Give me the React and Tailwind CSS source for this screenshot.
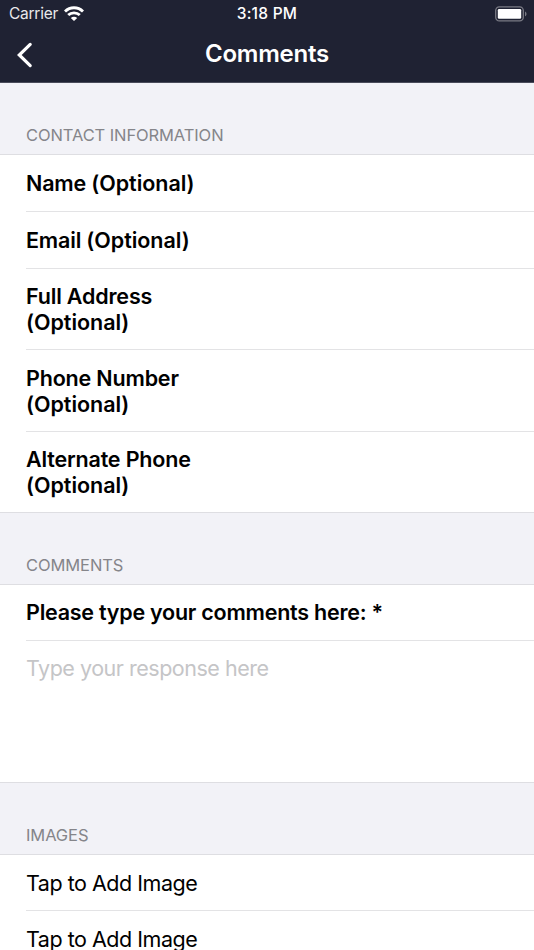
import React from 'react';

const contactFields = [
  { label: 'Name', height: 'h-[57px]' },
  { label: 'Email', height: 'h-[57px]' },
  { label: 'Full Address', height: 'h-[81px]', wrap: true },
  { label: 'Phone Number', height: 'h-[82px]', wrap: true },
  { label: 'Alternate Phone', height: 'h-[80px]', wrap: true },
];

const images = ['Tap to Add Image', 'Tap to Add Image'];

const WifiIcon = () => (
  <svg className="mb-px" width="20" height="15" viewBox="0 0 20 15" fill="none" stroke="currentColor" strokeWidth="2.8">
    <path d="M1 5.5C6 .5 14 .5 19 5.5" />
    <path d="M4.2 9.1c3.2-3.1 8.4-3.1 11.6 0" />
    <path d="M10 15l-3.2-3.1c1.8-1.6 4.6-1.6 6.4 0z" fill="currentColor" stroke="none" />
  </svg>
);

const BatteryIcon = () => (
  <svg className="mb-px" width="32" height="16" viewBox="0 0 32 16" fill="none">
    <rect x="0.7" y="0.9" width="27.6" height="14" rx="3.6" stroke="#797a84" strokeWidth="1.3" />
    <rect x="2.8" y="3" width="23.4" height="9.8" rx="1.3" fill="white" />
    <path d="M30 5.5c2 .8 2 4 0 4.8z" fill="#797a84" />
  </svg>
);

const BackIcon = () => (
  <svg className="ml-4 mt-px" width="17" height="26" viewBox="0 0 17 26" fill="none" stroke="currentColor" strokeWidth="3.2" strokeLinecap="round" strokeLinejoin="miter">
    <path d="M14.2 2.4L3.3 13l10.9 10.6" />
  </svg>
);

const SectionHeader = ({ children }) => (
  <div className="h-[71px] shrink-0 flex items-end pl-[26px] pb-[7px] text-[16.5px] leading-6 tracking-[-0.1px] text-[#85858a]">
    {children}
  </div>
);

const App = () => {
  return (
    <div className="h-[950px] w-[534px] overflow-hidden bg-[#f2f2f7] font-['Inter',sans-serif] text-black flex flex-col">
      {/* Header */}
      <header className="h-[83px] shrink-0 bg-[#1f2233] border-b border-[#4a4c5b] text-white">
        <div className="h-[28px] grid grid-cols-3 items-center px-[7px] text-[15.5px]">
          <div className="flex items-center gap-[6px] pl-[2px]">
            <span className="tracking-[-0.25px] text-[#e9e9eb]">Carrier</span>
            <WifiIcon />
          </div>
          <div className="text-center font-medium tracking-[0.25px]">3:18 PM</div>
          <div className="flex justify-end">
            <BatteryIcon />
          </div>
        </div>
        <div className="h-[52px] grid grid-cols-3 items-center">
          <BackIcon />
          <h1 className="text-center text-[24px] font-semibold tracking-[-0.25px]">Comments</h1>
        </div>
      </header>

      {/* Contact Information */}
      <SectionHeader>CONTACT INFORMATION</SectionHeader>
      <div className="shrink-0 bg-white border-y border-[#dedee2] pl-[26px]">
        {contactFields.map((field) => (
          <div key={field.label} className={`${field.height} flex items-center border-b border-[#e3e3e5] last:border-b-0`}>
            <div className="text-[21.5px] leading-[26px] font-semibold tracking-[-0.18px]">
              {field.label} {field.wrap && <br />}
              <span className="tracking-[-0.04px]">(Optional)</span>
            </div>
          </div>
        ))}
      </div>

      {/* Comments */}
      <SectionHeader>COMMENTS</SectionHeader>
      <div className="shrink-0 bg-white border-y border-[#dedee2] pl-[26px]">
        <div className="h-[56px] flex items-center border-b border-[#e3e3e5] text-[21.5px] font-semibold tracking-[-0.24px]">
          Please type your comments here: *
        </div>
        <div className="h-[141px] pt-[14px] text-[21.5px] leading-[26px] tracking-[-0.48px] text-[#c5c5c7]">
          Type your response here
        </div>
      </div>

      {/* Images */}
      <SectionHeader>IMAGES</SectionHeader>
      <div className="shrink-0 bg-white border-t border-[#dedee2] pl-[26px]">
        {images.map((label, index) => (
          <div key={index} className="h-[56px] flex items-center border-b border-[#e3e3e5] text-[21.5px] leading-[26px] tracking-[-0.48px]">
            {label}
          </div>
        ))}
      </div>
    </div>
  );
};

export default App;
